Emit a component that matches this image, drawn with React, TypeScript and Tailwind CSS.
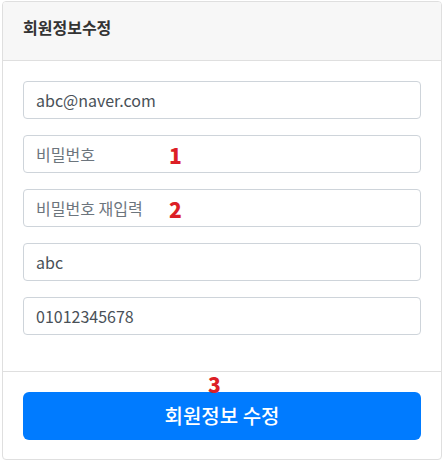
import React from "react"

const font = { fontFamily: '"Noto Sans CJK KR", "Noto Sans", sans-serif' }

function Field({ value, placeholder, mark }: { value?: string; placeholder?: string; mark?: string }) {
  return (
    <div className="relative h-[38px] border border-[#ced4da] rounded-[4px] bg-white px-3 flex items-center text-[16px]">
      {value ? (
        <span className="text-[#495057]">{value}</span>
      ) : (
        <span className="text-[#6c757d]">{placeholder}</span>
      )}
      {mark && (
        <span className="absolute left-[145px] top-[6px] text-[21px] font-black text-[#dc1f26] leading-[26px]">
          {mark}
        </span>
      )}
    </div>
  )
}

export default function App() {
  return (
    <div className="w-[444px] h-[463px] bg-white pt-px pl-[2px]" style={font}>
      <div className="w-[440px] h-[459px] border border-[#dfdfdf] rounded-[4px] flex flex-col overflow-hidden">
        {/* Header */}
        <div className="h-[59px] bg-[#f7f7f7] border-b border-[#dfdfdf] px-5 pt-[13px]">
          <span className="text-[16px] leading-[24px] font-bold text-[#333]">회원정보수정</span>
        </div>

        {/* Body */}
        <div className="flex-1 px-5 pt-5 flex flex-col gap-4 border-b border-[#dfdfdf]">
          <Field value="abc@naver.com" />
          <Field placeholder="비밀번호" mark="1" />
          <Field placeholder="비밀번호 재입력" mark="2" />
          <Field value="abc" />
          <Field value="01012345678" />
        </div>

        {/* Footer */}
        <div className="relative h-[87px] px-5 pt-5">
          <span className="absolute left-[205px] top-0 text-[21px] font-black text-[#dc1f26] leading-[24px]">3</span>
          <button className="w-full h-[48px] rounded-[6px] bg-[#007bff] text-white text-[20px] font-medium">
            회원정보 수정
          </button>
        </div>
      </div>
    </div>
  )
}
